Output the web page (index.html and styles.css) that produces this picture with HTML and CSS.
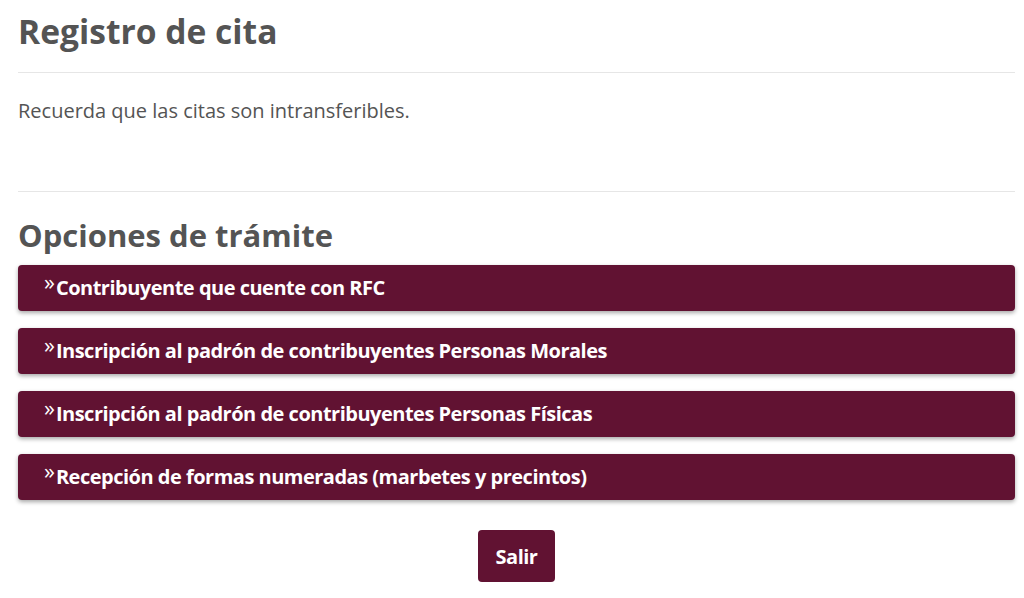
FILE: index.html
```html
<!DOCTYPE html>
<html lang="es">
<head>
    <meta charset="UTF-8">
    <meta name="viewport" content="width=device-width, initial-scale=1.0">
    <title>Registro de cita</title>
    <link rel="stylesheet" href="styles.css">
</head>
<body>

    <div class="container">
        <h1>Registro de cita</h1>
        <hr>

        <p class="notice">Recuerda que las citas son intransferibles.</p>
        <hr class="divider">

        <h2>Opciones de trámite</h2>

        <!-- Lista de trámites -->
        <div class="options">
            <a class="option" href="#"><span class="arrow">&raquo;</span>Contribuyente que cuente con RFC</a>
            <a class="option" href="#"><span class="arrow">&raquo;</span>Inscripción al padrón de contribuyentes Personas Morales</a>
            <a class="option" href="#"><span class="arrow">&raquo;</span>Inscripción al padrón de contribuyentes Personas Físicas</a>
            <a class="option" href="#"><span class="arrow">&raquo;</span>Recepción de formas numeradas (marbetes y precintos)</a>
        </div>

        <div class="actions">
            <button class="btn-exit">Salir</button>
        </div>
    </div>

</body>
</html>
```

FILE: styles.css
```css
body {
    margin: 0;
    font-family: "Open Sans", "Noto Sans", sans-serif;
    background-color: white;
    color: #545454;
}

.container {
    padding: 0 9px 0 18px;
}

h1 {
    font-size: 33.6px;
    font-weight: 700;
    line-height: 40px;
    margin: 11px 0 0;
}

hr {
    border: none;
    border-top: 1px solid #e6e6e6;
    margin: 21px 0 0;
}

.notice {
    font-size: 20px;
    line-height: 27px;
    margin: 24px 0 0;
}

.divider {
    margin-top: 67px;
}

h2 {
    font-size: 31px;
    font-weight: 700;
    line-height: 37px;
    margin: 25px 0 0;
}

.options {
    display: flex;
    flex-direction: column;
    gap: 17px;
    margin-top: 11px;
}

.option {
    display: block;
    background-color: #611232;
    color: white;
    text-decoration: none;
    font-size: 20px;
    font-weight: 700;
    letter-spacing: -0.5px;
    line-height: 46px;
    height: 46px;
    padding: 0 26px;
    border-radius: 4px;
    box-shadow: 0 2px 4px rgba(0, 0, 0, 0.35);
}

.arrow {
    font-size: 22px;
    font-weight: 400;
    line-height: 1;
    vertical-align: 5px;
    letter-spacing: 0;
    margin-right: 1px;
}

.actions {
    text-align: center;
    margin-top: 30px;
}

.btn-exit {
    background-color: #611232;
    color: white;
    border: none;
    border-radius: 4px;
    font-family: inherit;
    font-size: 20px;
    font-weight: 700;
    letter-spacing: -0.5px;
    width: 77px;
    height: 52px;
    cursor: pointer;
}
```
